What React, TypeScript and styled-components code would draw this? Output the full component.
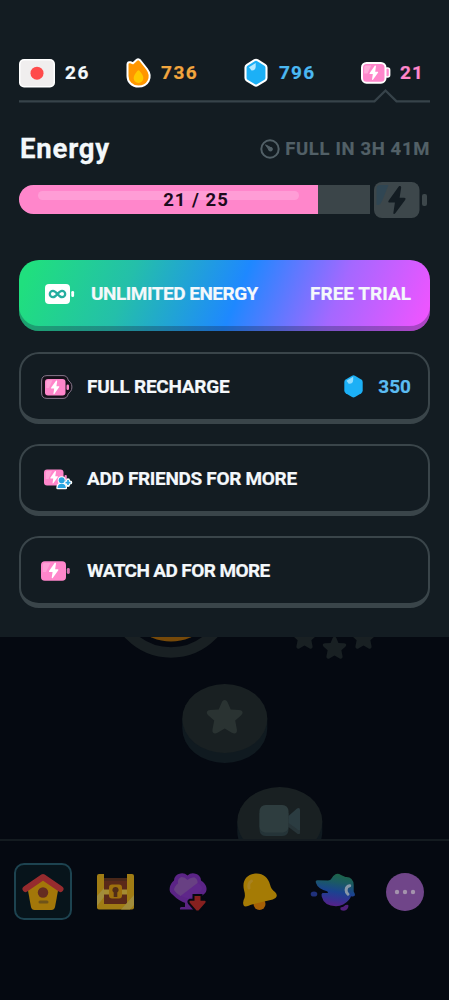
import React from "react";
import styled, { createGlobalStyle } from "styled-components";

const GlobalStyle = createGlobalStyle`
  * { box-sizing: border-box; }
  body { margin: 0; background: #050911; }
  svg { display: block; flex: none; overflow: visible; }
`;

const Screen = styled.div`
  width: 449px;
  height: 1000px;
  display: flex;
  flex-direction: column;
  overflow: hidden;
  background: #050911;
  color: #f4f8fb;
  font-family: Roboto, "Liberation Sans", sans-serif;
  font-weight: 700;
`;

const Drawer = styled.section`
  height: 637px;
  padding: 58px 19px 0;
  display: flex;
  flex-direction: column;
  background: #131c22;
`;

const StatBar = styled.header`
  height: 30px;
  display: grid;
  grid-template-columns: 107px 118px 117px 1fr;
  align-items: center;
`;

const Stat = styled.div<{ $color: string; $gap: number }>`
  display: flex;
  align-items: center;
  gap: ${(p) => p.$gap}px;
  color: ${(p) => p.$color};
`;

const Label = styled.span<{ $size?: number; $spacing?: number; $color?: string }>`
  font-size: ${(p) => p.$size ?? 19}px;
  line-height: 24px;
  letter-spacing: ${(p) => p.$spacing ?? 0}px;
  color: ${(p) => p.$color ?? "inherit"};
  -webkit-text-stroke: 0.2px currentColor;
  white-space: nowrap;
`;

const Divider = styled.div`
  height: 14px;
  margin-top: 1px;
`;

const TitleRow = styled.div`
  display: flex;
  height: 34px;
  margin-top: 29px;
  align-items: center;
  justify-content: space-between;
`;

const Title = styled.h1`
  margin: 0 0 0 1px;
  font-size: 27.5px;
  line-height: 34px;
  letter-spacing: 0.8px;
  -webkit-text-stroke: 0.3px currentColor;
`;

const Timer = styled.div`
  display: flex;
  align-items: center;
  gap: 5px;
  color: #526067;
`;

const Meter = styled.div`
  display: flex;
  align-items: center;
  height: 36px;
  margin-top: 15.5px;
  gap: 4px;
`;

const Track = styled.div`
  position: relative;
  width: 351px;
  height: 29px;
  border-radius: 15px 0 0 15px;
  background: #3b4549;
  overflow: hidden;
`;

const Fill = styled.div`
  width: 299px;
  height: 100%;
  padding: 5.5px 19px 0;
  background: #ff86cb;
`;

const Shine = styled.div`
  height: 9px;
  border-radius: 5px;
  background: #ff9dd6;
`;

const MeterText = styled.span`
  position: absolute;
  inset: 0 0 0 3px;
  text-align: center;
  color: #1c0b1c;
  font-size: 18.5px;
  line-height: 30px;
  letter-spacing: 1px;
`;

const Actions = styled.div`
  display: flex;
  flex-direction: column;
  gap: 20px;
  margin-top: 42.5px;
`;

const PlusButton = styled.button`
  all: unset;
  box-sizing: border-box;
  display: flex;
  align-items: center;
  height: 71px;
  margin-bottom: 1px;
  padding: 0 19px 4px 26px;
  border-radius: 20px;
  background: linear-gradient(112deg, #20df7e 3%, #24bfaa 27%, #1e88ff 53%, #a468ff 76%, #ee55ff 98%);
  box-shadow: inset 0 -5px 0 rgba(20, 29, 60, 0.3);
`;

const CardButton = styled.button`
  all: unset;
  box-sizing: border-box;
  display: flex;
  align-items: center;
  height: 72px;
  padding: 0 17px 0 20px;
  border: 2px solid #3a454a;
  border-bottom-width: 5px;
  border-radius: 20px;
`;

const IconSlot = styled.span<{ $width: number; $inset?: number }>`
  display: flex;
  width: ${(p) => p.$width}px;
  padding-left: ${(p) => p.$inset ?? 0}px;
  flex: none;
`;

const Trailing = styled.span`
  display: flex;
  align-items: center;
  gap: 15px;
  margin-left: auto;
`;

const LessonPath = styled.main`
  position: relative;
  height: 202px;
  overflow: hidden;
`;

const PathItem = styled.div<{ $x: number; $y: number }>`
  position: absolute;
  left: ${(p) => p.$x}px;
  top: ${(p) => p.$y}px;
`;

const TabBar = styled.nav`
  height: 161px;
  padding: 22px 7px 0;
  border-top: 2px solid #141b20;
  display: grid;
  grid-template-columns: repeat(6, 72.4px);
  align-items: start;
`;

const Tab = styled.div<{ $active?: boolean }>`
  width: 58px;
  height: 57px;
  margin-left: 7px;
  display: flex;
  align-items: center;
  justify-content: center;
  border-radius: 10px;
  border: 2px solid ${(p) => (p.$active ? "#1d4350" : "transparent")};
  background: ${(p) => (p.$active ? "#07141b" : "transparent")};
`;

const STAR =
  "M18 1.5c1.5 0 2.4 1 3 2.5l3 7 8.500 .5c3.500 .2 4.500 3 2 5.200l-6 5.300 1.700 9c.6 3.500-2 5-5 3.200L18 30l-7.200 4.200c-3 1.800-5.600 .3-5-3.200l1.700-9-6-5.300c-2.500-2.200-1.500-5 2-5.200l8.500-.5 3-7c.6-1.500 1.500-2.500 3-2.500Z";

function Flag() {
  return (
    <svg width="36" height="30" viewBox="0 0 36 30">
      <rect x="0" y="1" width="36" height="28.500" rx="5" fill="#fff" />
      <rect x="1.500" y="2.500" width="33" height="25.500" rx="4" fill="#f0eeee" />
      <circle cx="18" cy="15.200" r="6.500" fill="#ff4b4b" />
    </svg>
  );
}

function Flame() {
  return (
    <svg width="25" height="30" viewBox="0 0 25 30">
      <path
        d="M1.500 6.500C1.500 4.500 3 3.800 4.500 4.300L7 5.200 10.500 2C12 .7 13 1 14.300 2.500L21 11C24 15 24.500 19 22.500 23 20.500 26.800 17 28.600 12.500 28.600 6 28.600 1.500 24 1.500 18Z"
        fill="#ff9600"
        stroke="#fff"
        strokeWidth="2"
        strokeLinejoin="round"
      />
      <path d="M12.500 12.300c1 0 4.800 5 4.800 7.700 0 2.900-2 4.900-4.800 4.900s-4.800-2-4.800-4.900c0-2.700 3.800-7.700 4.800-7.700Z" fill="#ffc800" />
    </svg>
  );
}

function Gem({ outlined }: { outlined?: boolean }) {
  return outlined ? (
    <svg width="24" height="30" viewBox="0 0 24 30">
      <path
        d="M10.500 2.200q1.500-.9 3 0l7.500 4.600q1.500 1 1.500 2.700v10.500q0 1.700-1.500 2.600l-7.500 4.600q-1.500.9-3 0L3 22.600Q1.500 21.700 1.500 20V9.500Q1.500 7.800 3 6.800Z"
        fill="#1cb0f6"
        stroke="#fff"
        strokeWidth="2.100"
      />
      <path d="M5 9.200 11.700 5v3.200c0 3-1.700 4.500-4.200 4.200Z" fill="#b5e9ff" />
    </svg>
  ) : (
    <svg width="19" height="23" viewBox="0 0 19 23">
      <path d="M8 .7q1.500-.8 3 0l6.300 3.900q1.400.9 1.400 2.500v8.500q0 1.700-1.400 2.600L11 22q-1.500.9-3 0l-6.300-3.800Q.3 17.300.3 15.600V7.100q0-1.600 1.400-2.500Z" fill="#1cb0f6" />
      <path d="M2.400 5.700 9.200 1.800v2.700c0 3.300-1.600 4.600-4.500 4.300Z" fill="#8fdcff" />
    </svg>
  );
}

const BOLT = "M5.800 0 0 8.200c-.5.8-.2 1.300.6 1.300h3L2.700 15.500c-.1.900.6 1.100 1.100.4L9.500 8c.5-.8.2-1.300-.6-1.300H6.300L7.200.7C7.300-.2 6.400-.6 5.800 0Z";

function HeaderBattery() {
  return (
    <svg width="30" height="22" viewBox="0 0 30 22">
      <rect x="24" y="6" width="4.600" height="9" rx="2" fill="#ff86cb" stroke="#fff" strokeWidth="1.600" />
      <rect x="1" y="1" width="23.500" height="19.700" rx="4.500" fill="#ff86cb" stroke="#fff" strokeWidth="2" />
      <path d="M5 3.500h5.200L6.500 11.500H3.200V5.300Q3.200 3.500 5 3.500Z" fill="#ffaedb" />
      <path d={BOLT} transform="translate(8.700 3.800) scale(.87)" fill="#fff" />
    </svg>
  );
}

function PinkBattery() {
  return (
    <svg width="29" height="20" viewBox="0 0 29 20">
      <rect x="25.800" y="7" width="3" height="6" rx="1.400" fill="#d873b2" />
      <rect x="0" y=".3" width="25" height="19.400" rx="3.800" fill="#ff86cb" />
      <path d="M3.500 2h6L5 11H1.800V4Q1.800 2 3.500 2Z" fill="#ff9fd6" />
      <path d={BOLT} transform="translate(8.200 2) scale(.94)" fill="#fff" />
    </svg>
  );
}

function RechargeIcon() {
  return (
    <svg width="32" height="24" viewBox="0 0 32 24">
      <path d="M6 .6h16c3 0 4.500 1.500 5.200 4.400l2.500 2.800q1.200 1.500 1.200 4.200t-1.200 4.200L27.200 19c-.7 2.900-2.200 4.400-5.200 4.400H6Q.6 23.400.6 18V6Q.6.6 6 .6Z" fill="#151019" stroke="#86758a" strokeWidth="1" />
      <rect x="4" y="4" width="20.500" height="16.500" rx="3" fill="#ff86cb" />
      <path d="M6.500 5.300h5L8 13H5.400V6.500Q5.400 5.300 6.500 5.300Z" fill="#ffa4d8" />
      <rect x="25.500" y="9.500" width="2.500" height="5.500" rx="1.200" fill="#ff86cb" />
      <path d={BOLT} transform="translate(10.200 5.700) scale(.83)" fill="#fff" />
    </svg>
  );
}

function FriendsIcon() {
  return (
    <svg width="28" height="19" viewBox="0 0 28 19">
      <rect x="0" y=".5" width="19.500" height="16" rx="3" fill="#ff86cb" />
      <path d="M3 2h5L4.500 10H1.700V3.500Q1.700 2 3 2Z" fill="#ffa4d8" />
      <rect x="20.500" y="6" width="2.300" height="5" rx="1" fill="#ff86cb" />
      <path d={BOLT} transform="translate(6.500 2.200) scale(.76)" fill="#fff" />
      <g stroke="#fff" strokeWidth="2.600" strokeLinejoin="round" fill="#2aa4e0">
        <circle cx="17.700" cy="11.200" r="2.700" />
        <path d="M13.600 19c0-3 1.500-4.200 4.100-4.200s4.100 1.200 4.100 4.200Z" />
        <path d="M24 11.300v4.600M21.700 13.600h4.600" strokeWidth="4" strokeLinecap="round" />
      </g>
      <circle cx="17.700" cy="11.200" r="3" fill="#2aa4e0" />
      <path d="M13.600 19c0-3 1.500-4.200 4.100-4.200s4.100 1.200 4.100 4.200Z" fill="#2aa4e0" />
      <path d="M24 11.100v5M21.500 13.600h5" stroke="#2aa4e0" strokeWidth="1.700" />
    </svg>
  );
}

function InfinityBattery() {
  return (
    <svg width="30" height="20" viewBox="0 0 30 20">
      <rect width="25" height="20" rx="4" fill="#fff" />
      <rect x="26.300" y="7" width="2.800" height="6" rx="1.300" fill="#fff" />
      <path d="M12.500 10C10.600 7.600 9.500 6.800 8 6.800a3.200 3.200 0 0 0 0 6.400c1.500 0 2.600-.8 4.500-3.200s3-3.200 4.500-3.200a3.200 3.200 0 0 1 0 6.400c-1.500 0-2.600-.8-4.500-3.200Z" fill="none" stroke="#25ad9f" strokeWidth="2.300" />
    </svg>
  );
}

function EmptyBattery() {
  return (
    <svg width="54" height="36" viewBox="0 0 54 36">
      <rect x="0" y="0" width="45.500" height="36" rx="8" fill="#3d474b" />
      <path d="M6 3h8.500L8 19q-1.500 3.500-3.500 4H2.500V6.500Q2.500 3 6 3Z" fill="#304653" />
      <path d={BOLT} transform="translate(14.700 4.600) scale(1.730 1.680)" fill="#131c22" />
      <rect x="48" y="12" width="5" height="12" rx="2" fill="#3d474b" />
    </svg>
  );
}

function TimerIcon() {
  return (
    <svg width="20" height="20" viewBox="0 0 20 20" fill="none">
      <circle cx="10" cy="10" r="8.700" stroke="#526067" strokeWidth="2" />
      <path d="m5.500 5.800 6.700 3.500-2.400 2.700Z" fill="#526067" stroke="#526067" strokeLinejoin="round" />
      <circle cx="10.500" cy="10.300" r="2.200" fill="#526067" />
    </svg>
  );
}

function HomeIcon() {
  return (
    <svg width="42" height="38" viewBox="0 0 42 38">
      <path d="M21 5 5.500 15 9 34q.7 3 3.500 3h17q2.800 0 3.500-3L36.500 15Z" fill="#a37709" />
      <path d="M3.500 16 21 4 38.500 16" fill="none" stroke="#962b2e" strokeWidth="6" strokeLinecap="round" strokeLinejoin="round" />
      <circle cx="21" cy="19.500" r="5.200" fill="#642d21" />
      <rect x="16.500" y="27.500" width="10" height="3" rx="1.500" fill="#6f5319" />
    </svg>
  );
}

function ChestIcon() {
  return (
    <svg width="37" height="36" viewBox="0 0 37 36">
      <rect width="37" height="35.500" rx="2" fill="#a07c14" />
      <path d="M7 0h23v4H7Z" fill="#050911" />
      <path d="M7 4h23v26H7Z" fill="#5a2919" />
      <path d="M7 15.500h23v5H7Z" fill="#a58c32" />
      <path d="M0 22 7 14v9l-7 9ZM24 35.500 37 21v10l-4 4.500Z" fill="#a18c3b" />
      <path d="M7 4h23v3H7Z" fill="#492719" />
      <rect x="12" y="10.500" width="13" height="14" rx="3" fill="#9e700d" />
      <path d="M18.500 13a3 3 0 0 1 1.800 5.500V23h-3.600v-4.500A3 3 0 0 1 18.500 13Z" fill="#522d18" />
    </svg>
  );
}

function LeagueIcon() {
  return (
    <svg width="38" height="38" viewBox="0 0 38 38">
      <path d="M16 26h6v8h3.500q1.500 0 1.500 2.500H11q-.5-2.500 1.500-2.500H16Z" fill="#5a2381" />
      <path d="M11.500.5q4-.8 7 2 3-2.800 7-2 6 .8 6.500 7 4.500 2.500 5.500 7.500.5 4-3 6.500Q28 28.500 19 31 10 28.500 3.500 21.500 0 19 .7 15 1.500 10 5 7.500 5.500 1.300 11.500.5Z" fill="#5b2486" />
      <path d="M12.500 4q3.500 0 6 3 3-3 6-3 4 1 4 6 3.500 1.500 5 5-1 4-5.500 5.500L20 26Q9 23 5 17q.5-4 4-6.500Q8 5.500 12.500 4Z" fill="#5f278a" />
      <path d="M25.500 4.500Q29 6 28.500 10L11.500 23Q6.500 20 5 17q.5-4 4-6.500Q8 5.500 12.500 4q3.500 0 6 3 3-3 7-2.500Z" fill="#684083" />
      <path d="M25.500 23h6v4.800h4.500q1.300.7.300 2L29.500 37.500h-2L20.800 29.800q-1-1.300.3-2h4.400Z" fill="#86201f" stroke="#050911" strokeWidth="4" paintOrder="stroke" />
    </svg>
  );
}

function BellIcon() {
  return (
    <svg width="34" height="38" viewBox="0 0 34 38">
      <circle cx="16.500" cy="31" r="6" fill="#a56006" />
      <path d="M1 17C-1.200 8 3.500 2 11 .8 19-.5 25 4 27 11.500q1 4.500 5 7.500 3.300 3.500.5 6-2 1.600-7 2.500L8 31.800Q2 34.800.7 32.500-.8 29 1.500 25 2.500 22 1 17Z" fill="#a57b05" />
      <path d="M6 15q-1-5 2.500-7" fill="none" stroke="#a88221" strokeWidth="3" strokeLinecap="round" />
    </svg>
  );
}

function MascotIcon() {
  return (
    <svg width="44" height="38" viewBox="0 0 44 38">
      <defs>
        <linearGradient id="mascot" x1=".6" y1="0" x2=".4" y2="1">
          <stop offset="0" stopColor="#1d6548" />
          <stop offset=".25" stopColor="#1b5b62" />
          <stop offset=".55" stopColor="#1a4390" />
          <stop offset=".78" stopColor="#373091" />
          <stop offset="1" stopColor="#5a2088" />
        </linearGradient>
      </defs>
      <path d="M6.500 7.300Q4 7.500 5 10 6 13.500 9 15.200q3 1.800 7 3 2 1 .5 1.700l-5 .1Q10 20.500 10.700 23.500 13 33 25 33.300q8-.3 13-6.500 1.500-1.800 2-3.500 3.800.7 4-1.300 0-1.500-1.300-3.500V12q-.2-4-2.200-6-2-2.300-6-2L30 2q-3-2-5.500-.8Q22 2.500 20.500 5.500 19.500 7.500 17 7.500Z" fill="url(#mascot)" />
      <path d="M38.700 12.700q-3.300.3-3.600 4.300 0 3 1.900 4.200" fill="none" stroke="#8898a8" strokeWidth="3" strokeLinecap="round" />
      <ellipse cx="3" cy="21" rx="3.300" ry="2.600" fill="#20317c" />
      <path d="M29.500 34.500q3-.5 5-2.500 3-1 3 1-.5 4-4.500 4.800-4.500 0-3.500-3.300Z" fill="#51207a" />
    </svg>
  );
}

function MoreIcon() {
  return (
    <svg width="38" height="38" viewBox="0 0 38 38">
      <circle cx="19" cy="19" r="19" fill="#704589" />
      <g fill="#a493ad">
        <circle cx="11" cy="19" r="2.200" />
        <circle cx="19" cy="19" r="2.200" />
        <circle cx="27" cy="19" r="2.200" />
      </g>
    </svg>
  );
}

function Disc({ children }: { children: React.ReactNode }) {
  return (
    <svg width="86" height="80" viewBox="0 0 86 80">
      <path d="M.3 34.500v10a42.500 34.500 0 0 0 85 0v-10Z" fill="#101a20" />
      <ellipse cx="42.800" cy="34.500" rx="42.500" ry="34.500" fill="#192022" />
      {children}
    </svg>
  );
}

function SmallStar() {
  return (
    <svg width="21" height="21" viewBox="2 2 32 32">
      <path d={STAR} fill="#192023" />
    </svg>
  );
}

export default function App() {
  return (
    <Screen>
      <GlobalStyle />
      <Drawer>
        <StatBar>
          <Stat $color="#f4f8fb" $gap={10}><Flag /><Label $spacing={1.5}>26</Label></Stat>
          <Stat $color="#f2a63e" $gap={10}><Flame /><Label $spacing={1.5}>736</Label></Stat>
          <Stat $color="#4bb8f2" $gap={11}><Gem outlined /><Label $spacing={1.2}>796</Label></Stat>
          <Stat $color="#ff86cb" $gap={9}><HeaderBattery /><Label $spacing={1.2}>21</Label></Stat>
        </StatBar>
        <Divider>
          <svg width="411" height="14" viewBox="0 0 411 14" fill="none">
            <path d="M0 12.300h355.500l11-10.800 11 10.800H411" stroke="#37434a" strokeWidth="2.300" />
          </svg>
        </Divider>
        <TitleRow>
          <Title>Energy</Title>
          <Timer><TimerIcon /><Label $size={18.5} $spacing={0.65}>FULL IN 3H 41M</Label></Timer>
        </TitleRow>
        <Meter>
          <Track>
            <Fill><Shine /></Fill>
            <MeterText>21 / 25</MeterText>
          </Track>
          <EmptyBattery />
        </Meter>
        <Actions>
          <PlusButton>
            <IconSlot $width={46}><InfinityBattery /></IconSlot>
            <Label $spacing={-0.5}>UNLIMITED ENERGY</Label>
            <Trailing><Label>FREE TRIAL</Label></Trailing>
          </PlusButton>
          <CardButton>
            <IconSlot $width={46}><RechargeIcon /></IconSlot>
            <Label $spacing={-0.25}>FULL RECHARGE</Label>
            <Trailing><Gem /><Label $color="#5bbcf2">350</Label></Trailing>
          </CardButton>
          <CardButton>
            <IconSlot $width={46} $inset={3}><FriendsIcon /></IconSlot>
            <Label $spacing={-0.32}>ADD FRIENDS FOR MORE</Label>
          </CardButton>
          <CardButton>
            <IconSlot $width={46}><PinkBattery /></IconSlot>
            <Label $spacing={-0.6}>WATCH AD FOR MORE</Label>
          </CardButton>
        </Actions>
      </Drawer>
      <LessonPath>
        <PathItem $x={107} $y={-106}>
          <svg width="128" height="128" viewBox="0 0 128 128">
            <circle cx="64" cy="64" r="57.500" fill="none" stroke="#192023" strokeWidth="10.500" />
            <circle cx="64" cy="61.500" r="49" fill="#764909" />
          </svg>
        </PathItem>
        <PathItem $x={294} $y={-10}><SmallStar /></PathItem>
        <PathItem $x={323.5} $y={-0.5}><SmallStar /></PathItem>
        <PathItem $x={353} $y={-10}><SmallStar /></PathItem>
        <PathItem $x={182} $y={47}>
          <Disc><path d={STAR} transform="translate(24.700 14.500)" fill="#2a3332" /></Disc>
        </PathItem>
        <PathItem $x={236.5} $y={150}>
          <Disc>
            <path d="M22.500 26h29v16q0 7-6 7h-17q-6 0-6-7Z" fill="#253438" />
            <path d="M51.500 32 60 24q3-1 3 2v20.500q-1.500 1-3 0L51.500 40Z" fill="#273438" />
            <path d="M51.500 29 60 21.500q3-1.500 3 1.500v20q-1.500 1-3-1L51.500 36Z" fill="#2b3c41" />
            <rect x="22.500" y="18" width="29" height="27.500" rx="6" fill="#2e3d3f" />
          </Disc>
        </PathItem>
      </LessonPath>
      <TabBar>
        <Tab $active><HomeIcon /></Tab>
        <Tab><ChestIcon /></Tab>
        <Tab><LeagueIcon /></Tab>
        <Tab><BellIcon /></Tab>
        <Tab><MascotIcon /></Tab>
        <Tab><MoreIcon /></Tab>
      </TabBar>
    </Screen>
  );
}
